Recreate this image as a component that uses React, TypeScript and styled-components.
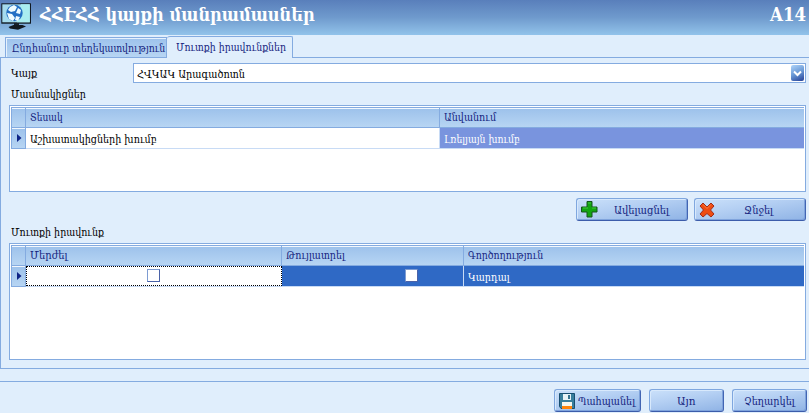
import React, { useLayoutEffect, useRef, useState } from 'react';
import styled, { createGlobalStyle } from 'styled-components';

const line = '#84abe0';
const navy = '#15247f';

const GlobalStyle = createGlobalStyle`
  * { box-sizing: border-box; }
  body { margin: 0; background: #e0eefc; overflow: hidden; }
`;

const Page = styled.div`
  width: 809px;
  height: 413px;
  display: flex;
  flex-direction: column;
  background: #e0eefc;
  color: #000;
  font-family: 'DejaVu Serif', serif;
  font-size: 10.5px;
  line-height: 14px;
`;

const TextBox = styled.span<{ $width: number; $lift?: number }>`
  display: block;
  flex: none;
  width: ${p => p.$width}px;
  white-space: nowrap;
  margin-top: ${p => -(p.$lift ?? 0)}px;
`;

const TextRun = styled.span`
  display: inline-block;
  transform-origin: 0 50%;
`;

/* Condenses a run of text horizontally so that it fills its column width. */
function Fit({ w, lift, children }: { w: number; lift?: number; children: string }) {
  const ref = useRef<HTMLSpanElement>(null);
  const [scale, setScale] = useState(1);
  useLayoutEffect(() => {
    if (ref.current) setScale(w / ref.current.offsetWidth);
  }, [w, children]);
  return (
    <TextBox $width={w} $lift={lift}>
      <TextRun ref={ref} style={{ transform: `scaleX(${scale})` }}>{children}</TextRun>
    </TextBox>
  );
}

const Header = styled.header`
  height: 35px;
  flex: none;
  display: flex;
  align-items: flex-start;
  padding: 3px 3px 0 1px;
  background: linear-gradient(#597fbb, #6f9acd 50%, #92c3ea);
  color: #fff;
  font-size: 18px;
  font-weight: bold;
  line-height: 24px;
`;

const Title = styled.h1`
  flex: 1;
  margin: 0 0 0 8px;
  font: inherit;
`;

const Tabs = styled.nav`
  height: 23px;
  flex: none;
  display: flex;
  align-items: flex-end;
  padding-left: 5px;
  border-bottom: 1px solid ${line};
  color: ${navy};
`;

const Tab = styled.div<{ $active?: boolean }>`
  height: ${p => (p.$active ? 22 : 20)}px;
  width: ${p => (p.$active ? 126 : 162)}px;
  margin-bottom: ${p => (p.$active ? -1 : 0)}px;
  padding: ${p => (p.$active ? '3px 0 0 9px' : '3px 0 0 6px')};
  border: 1px solid ${line};
  border-bottom: 0;
  border-left-width: ${p => (p.$active ? 0 : 1)}px;
  border-radius: ${p => (p.$active ? '3px 2px 0 0' : '0')};
  box-shadow: ${p => (p.$active ? 'none' : 'inset 1px 1px #e5f1fd')};
  background: ${p => (p.$active ? '#e0eefc' : 'linear-gradient(#9dc2ec, #b7d5f3)')};
`;

const Panel = styled.main`
  height: 311px;
  flex: none;
  display: flex;
  flex-direction: column;
  padding: 5px 3px 0 8px;
  border-left: 1px solid ${line};
  border-bottom: 1px solid ${line};
`;

const FieldRow = styled.div`
  display: flex;
  align-items: center;
  justify-content: space-between;
  height: 20px;
  padding-left: 2px;
`;

const Combo = styled.div`
  width: 673px;
  height: 20px;
  display: flex;
  align-items: center;
  justify-content: space-between;
  padding: 0 1px 0 3px;
  background: #fff;
  border: 1px solid ${line};
`;

const Arrow = styled.button`
  width: 13px;
  height: 16px;
  display: flex;
  align-items: center;
  justify-content: center;
  padding: 0;
  border: 0;
  border-radius: 2px;
  background: linear-gradient(155deg, #b0d5fa, #6998d5 50%, #243f96);
`;

const Caption = styled.div<{ $height: number; $top: number }>`
  height: ${p => p.$height}px;
  flex: none;
  padding: ${p => p.$top}px 0 0 2px;
`;

const Grid = styled.section<{ $height: number; $columns: string }>`
  height: ${p => p.$height}px;
  flex: none;
  padding: 1px;
  border: 1px solid ${line};
  background: #fff;
  display: grid;
  grid-template-columns: ${p => p.$columns};
  grid-template-rows: 21px 21px;
`;

const HeadCell = styled.div<{ $first?: boolean; $end?: boolean }>`
  display: flex;
  align-items: center;
  padding: 0 0 1px 4px;
  color: ${navy};
  border: solid ${line};
  border-width: 1px ${p => (p.$end ? 0 : 1)}px 1px ${p => (p.$first ? 1 : 0)}px;
  background: linear-gradient(#9cc1eb, #b7d5f3);
  box-shadow: inset 0 1px #f1f7fe;
`;

const Indicator = styled.div`
  display: flex;
  align-items: flex-start;
  padding: 6px 0 0 5px;
  border: solid ${line};
  border-width: 0 1px 1px;
  background: linear-gradient(#9cc1eb, #b7d5f3);
  box-shadow: inset 0 1px #f1f7fe;
`;

const Cell = styled.div<{ $tone?: 'plain' | 'soft' | 'strong' | 'focus'; $end?: boolean; $check?: number; $divider?: boolean }>`
  display: flex;
  align-items: ${p => (p.$check ? 'flex-start' : 'center')};
  padding: ${p => (p.$check ? 3 : 2)}px 0 0 ${p => p.$check ?? 4}px;
  border: solid #c8dbf5;
  border-width: 0 ${p => (p.$end ? 0 : 1)}px 1px 0;
  color: ${p => (p.$tone === 'soft' || p.$tone === 'strong' ? '#fff' : '#000')};
  background: ${p => (p.$tone === 'soft' ? '#7994de' : p.$tone === 'strong' ? '#2f69c5' : '#fff')};
  ${p => p.$tone === 'focus' && `
    height: 20px;
    padding-top: 2px;
    border: 1px dotted #000;
    box-shadow: 0 1px #c8dbf5;
  `}
`;

const Check = styled.span`
  width: 13px;
  height: 13px;
  border: 1px solid;
  border-color: #7e9cd2 #4a62a8 #4a62a8 #7e9cd2;
  background: #fff;
`;

const Actions = styled.div<{ $gap: number; $top: number; $right?: number }>`
  display: flex;
  flex: none;
  justify-content: flex-end;
  gap: ${p => p.$gap}px;
  padding: ${p => p.$top}px ${p => p.$right ?? 0}px 0 0;
`;

const Footer = styled.footer`
  height: 32px;
  margin-top: 12px;
  border-top: 1px solid ${line};
`;

const Button = styled.button<{ $width: number; $pad: number; $gap?: number }>`
  width: ${p => p.$width}px;
  height: 23px;
  display: flex;
  align-items: center;
  gap: ${p => p.$gap ?? 0}px;
  padding: 0 0 0 ${p => p.$pad}px;
  border: 1px solid;
  border-color: #7fa7df #4265b3 #3c5caa #7fa7df;
  border-radius: 3px;
  background: linear-gradient(170deg, #cbe1fa, #b5d0f3 40%, #8fb3e5);
  box-shadow: inset 1px 1px #d8e9fc, inset -1px -1px #7fa3dc;
  color: ${navy};
  font: inherit;
  text-align: left;
`;

const Monitor = () => (
  <svg width="31" height="28" viewBox="0 0 31 28">
    <rect x="0.3" y="0.3" width="29.7" height="20.400" fill="#101922" />
    <rect x="1.300" y="1.300" width="27.500" height="18" fill="#a5dbee" />
    <path d="M20 1.300h8.800v18H16z" fill="#a9edf0" />
    <circle cx="13.500" cy="10" r="8.200" fill="#2370c4" />
    <path d="M9 4l4-2 3 2-2 4-4 1-3-2zM17 5l3 2-1 4-4-1zM6 10l5 1 3 4-2 3-4-2zM15 13l4 1-2 4-3-1z" fill="#effcff" />
    <path d="M13 20h5v3h-5z" fill="#17202b" />
    <path d="M7.500 24l5-2h9l3.500 1.500-8 3.200-8-1.200z" fill="#111820" />
  </svg>
);

const Marker = () => (
  <svg width="5" height="8" viewBox="0 0 5 8"><path d="M0 0l4.500 4-4.500 4z" fill="#0e2386" /></svg>
);

const Plus = () => (
  <svg width="17" height="17" viewBox="0 0 17 17">
    <path d="M6 .5h5V6h5v5h-5v5H6v-5H.5V6H6z" fill="#12a412" stroke="#14551b" />
    <path d="M7 2h3M2 7h5M11 7h4" stroke="#43ca3b" />
  </svg>
);

const Cross = () => (
  <svg width="16" height="16" viewBox="0 0 16 16">
    <path d="M4 1l4 4 4-4 3 3-3.500 4L15 12l-3 3-4-3.500L4 15l-3-3 3.500-4L1 4z" fill="#ee4c13" stroke="#a12c18" />
    <path d="M4 2.500l4 4 4-4" fill="none" stroke="#ff7b3c" />
  </svg>
);

const Disk = () => (
  <svg width="16" height="16" viewBox="0 0 16 16">
    <path d="M.5.5h15v15H2l-1.500-2z" fill="#387e9c" stroke="#174e70" />
    <path d="M4 1h8v6H4z" fill="#e6f2f6" />
    <path d="M9 2h2v4H9z" fill="#34718d" />
    <path d="M3 9h10v4H3z" fill="#f4f7ef" />
    <path d="M3 13h10v3H3z" fill="#ff850c" />
  </svg>
);

export default function App() {
  return (
    <>
      <GlobalStyle />
      <Page>
        <Header>
          <Monitor />
          <Title><Fit w={275}>ՀՀԷՀՀ կայքի մանրամասներ</Fit></Title>
          <Fit w={36}>A14</Fit>
        </Header>
        <Tabs>
          <Tab><Fit w={153}>Ընդհանուր տեղեկատվություն</Fit></Tab>
          <Tab $active><Fit w={110}>Մուտքի իրավունքներ</Fit></Tab>
        </Tabs>
        <Panel>
          <FieldRow>
            <Fit w={26}>Կայք</Fit>
            <Combo>
              <Fit w={108} lift={-1}>ՀՎԿԱԿ Արագածոտն</Fit>
              <Arrow>
                <svg width="9" height="7" viewBox="0 0 9 7"><path d="M1 1.500l3.500 3.500L8 1.500" fill="none" stroke="#fff" strokeWidth="2" /></svg>
              </Arrow>
            </Combo>
          </FieldRow>
          <Caption $height={22} $top={4}><Fit w={75}>Մասնակիցներ</Fit></Caption>
          <Grid $height={87} $columns="15px 414px 1fr">
            <HeadCell $first />
            <HeadCell><Fit w={33}>Տեսակ</Fit></HeadCell>
            <HeadCell $end><Fit w={52}>Անվանում</Fit></HeadCell>
            <Indicator><Marker /></Indicator>
            <Cell><Fit w={127}>Աշխատակիցների խումբ</Fit></Cell>
            <Cell $tone="soft" $end><Fit w={76}>Լռելյայն խումբ</Fit></Cell>
          </Grid>
          <Actions $gap={6} $top={6}>
            <Button $width={112} $pad={4} $gap={16}><Plus /><Fit w={55}>Ավելացնել</Fit></Button>
            <Button $width={112} $pad={4} $gap={29}><Cross /><Fit w={29}>Ջնջել</Fit></Button>
          </Actions>
          <Caption $height={22} $top={4}><Fit w={93}>Մուտքի իրավունք</Fit></Caption>
          <Grid $height={117} $columns="15px 256px 182px 1fr">
            <HeadCell $first />
            <HeadCell><Fit w={38}>Մերժել</Fit></HeadCell>
            <HeadCell><Fit w={59}>Թույլատրել</Fit></HeadCell>
            <HeadCell $end><Fit w={75}>Գործողություն</Fit></HeadCell>
            <Indicator><Marker /></Indicator>
            <Cell $tone="focus" $check={120}><Check /></Cell>
            <Cell $tone="strong" $check={123}><Check /></Cell>
            <Cell $tone="strong" $end><Fit w={42}>Կարդալ</Fit></Cell>
          </Grid>
        </Panel>
        <Footer>
          <Actions $gap={8} $top={7} $right={2}>
            <Button $width={87} $pad={4} $gap={3}><Disk /><Fit w={57}>Պահպանել</Fit></Button>
            <Button $width={75} $pad={27}><Fit w={19}>Այո</Fit></Button>
            <Button $width={75} $pad={11}><Fit w={51}>Չեղարկել</Fit></Button>
          </Actions>
        </Footer>
      </Page>
    </>
  );
}
